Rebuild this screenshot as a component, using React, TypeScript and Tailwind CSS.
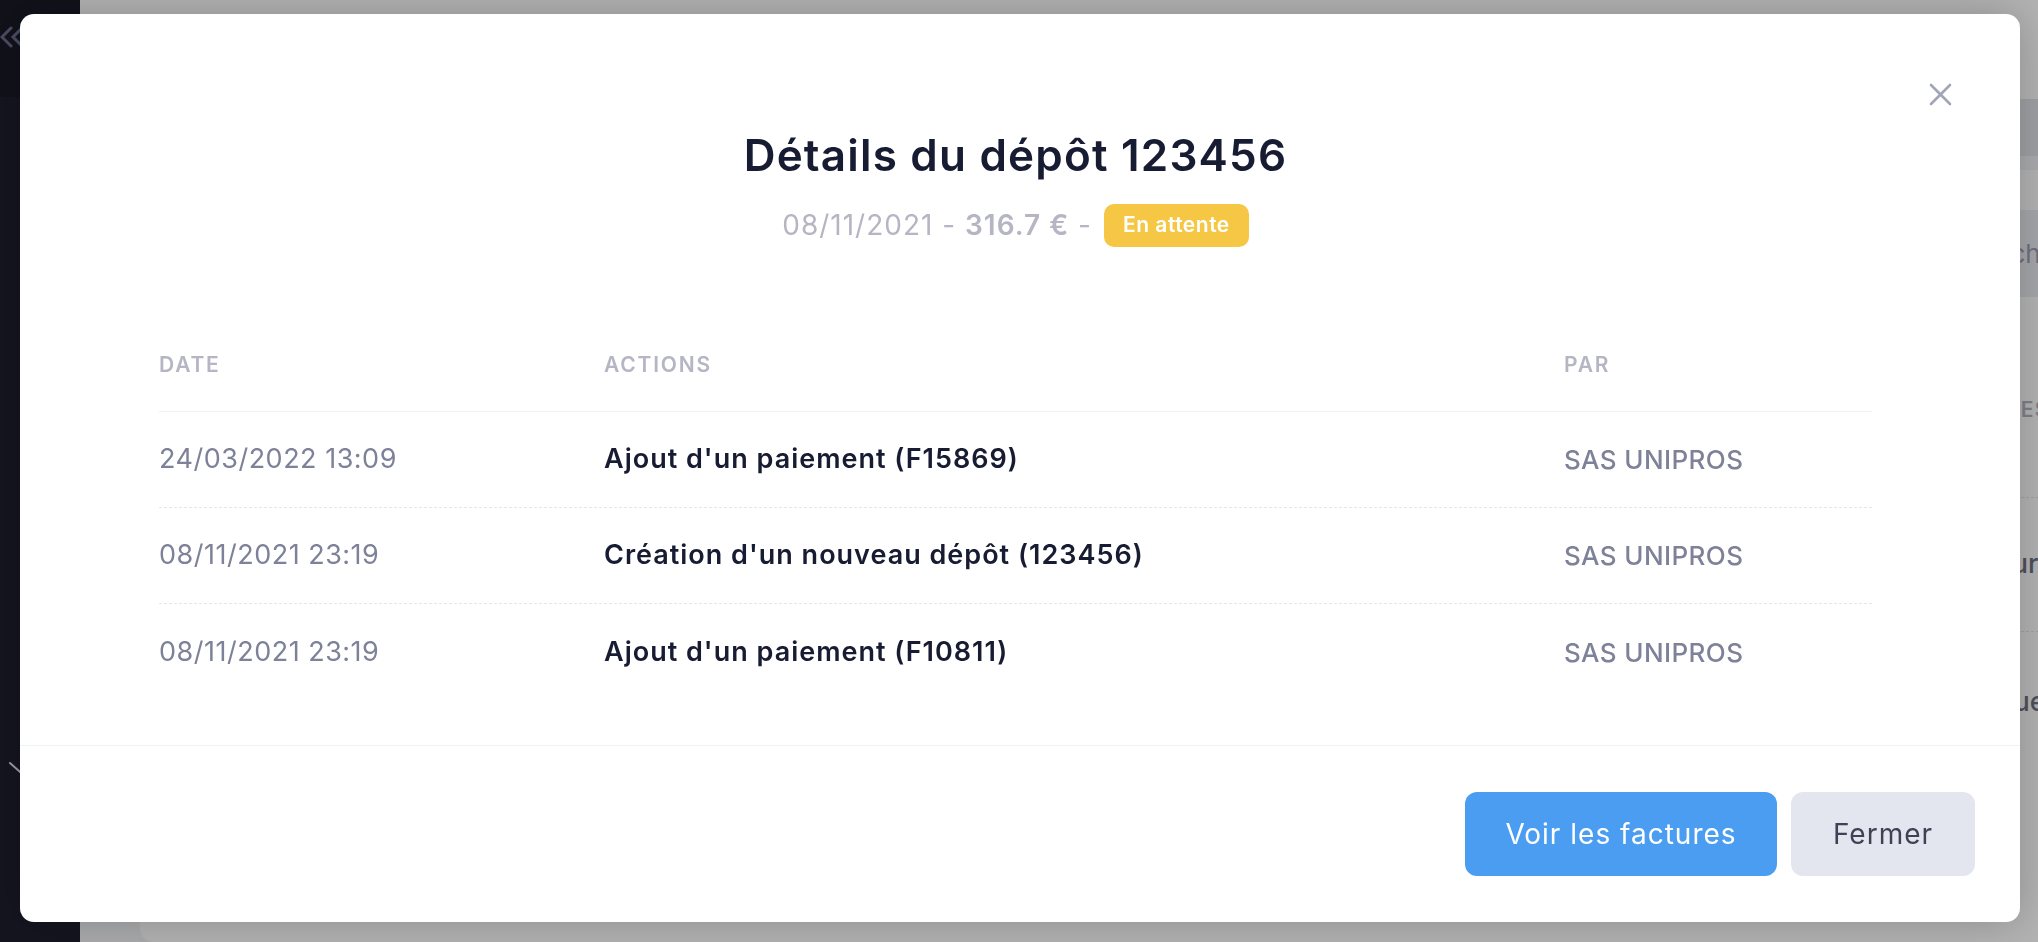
const rows = [
  { date: "24/03/2022 13:09", action: "Ajout d'un paiement (F15869)", by: "SAS UNIPROS" },
  { date: "08/11/2021 23:19", action: "Création d'un nouveau dépôt (123456)", by: "SAS UNIPROS" },
  { date: "08/11/2021 23:19", action: "Ajout d'un paiement (F10811)", by: "SAS UNIPROS" },
];

const font = { fontFamily: '"Inter", "Noto Sans", sans-serif' };

function Background() {
  return (
    <div className="flex h-[942px] w-full overflow-hidden bg-[#f3f4f7]">
      <aside className="w-[80px] shrink-0 flex flex-col bg-[#1e1e2d]">
        <div className="h-[97px] bg-[#191926] pt-[26px]">
          <svg width="28" height="22" viewBox="0 0 28 22" fill="none" stroke="#6b6b90" strokeWidth="3" strokeLinecap="round">
            <path d="M11 2 L2 11 L11 20" />
            <path d="M22 2 L13 11 L22 20" />
          </svg>
        </div>
        <div className="flex-1 pt-[664px] pl-[8px]">
          <svg width="24" height="14" viewBox="0 0 24 14" fill="none" stroke="#e2e2ea" strokeWidth="2" strokeLinecap="round">
            <path d="M2 2 L12 11 L22 2" />
          </svg>
        </div>
      </aside>

      <main className="flex-1 flex flex-col overflow-hidden">
        <header className="h-[99px] bg-white shrink-0" />
        <div className="h-[57px] bg-[#e3e5ea] shrink-0" />
        <div className="flex-1 pt-[14px] pl-[60px] mr-[-60px]">
          <div className="h-full bg-white rounded-[14px] pt-[40px]">
            <div className="flex justify-end">
              <div className="w-[128px] h-[87px] bg-[#eceef4] rounded-l-[10px] pl-[9px] flex items-center text-[26px] text-[#9ea1b2] whitespace-nowrap overflow-hidden">
                Rechercher
              </div>
            </div>
            <div className="mt-[98px] flex justify-end">
              <div className="w-[126px] overflow-hidden whitespace-nowrap">
                <div className="leading-[30px] pb-[72px] text-[21px] font-semibold tracking-[1.5px] text-[#b5b5c3] border-b border-dashed border-[#e4e6ef]">
                  ADRESSE
                </div>
                <div className="h-[134px] pl-[8px] flex items-center text-[27px] font-medium text-[#6f7283] border-b border-dashed border-[#e4e6ef]">
                  Tours
                </div>
                <div className="h-[140px] pl-[8px] flex items-center text-[27px] font-medium text-[#6f7283]">
                  Rouen
                </div>
              </div>
            </div>
          </div>
        </div>
      </main>
    </div>
  );
}

function Modal() {
  return (
    <div className="fixed inset-0 pt-[14px] pl-[20px]">
      <div className="relative w-[2000px] h-[908px] bg-white rounded-[14px] shadow-[0_0_45px_rgba(0,0,0,0.22)] flex flex-col">
        <button className="absolute top-[69px] right-[68px] w-[23px] h-[23px]">
          <svg width="23" height="23" viewBox="0 0 23 23" fill="none" stroke="#a1a5b7" strokeWidth="2.6" strokeLinecap="round">
            <path d="M2 2 L21 21" />
            <path d="M21 2 L2 21" />
          </svg>
        </button>

        <div className="flex-1 pl-[139px] pr-[148px] pt-[113px]">
          <h2 className="text-center text-[44px] leading-[56px] font-semibold tracking-[1.2px] text-[#181c32]">
            Détails du dépôt 123456
          </h2>
          <div className="mt-[20px] h-[44px] flex items-center justify-center text-[28px] tracking-[1px] text-[#b5b5c3]">
            <span>08/11/2021 -&nbsp;</span>
            <span className="font-semibold">316.7 €</span>
            <span>&nbsp;-</span>
            <span className="ml-[12px] h-[43px] px-[19px] flex items-center rounded-[10px] bg-[#f6c744] text-white text-[21px] tracking-[0.5px] font-semibold">
              En attente
            </span>
          </div>

          <div className="mt-[103px]">
            <div className="grid grid-cols-[445px_960px_1fr] leading-[30px] pb-[31px] border-b border-[#eff2f5] text-[21px] font-semibold tracking-[1.8px] text-[#b5b5c3] uppercase">
              <div>Date</div>
              <div>Actions</div>
              <div>Par</div>
            </div>
            {rows.map((row, i) => (
              <div
                key={i}
                className={`grid grid-cols-[445px_960px_1fr] h-[96px] items-center ${
                  i < rows.length - 1 ? "border-b border-dashed border-[#e4e6ef]" : ""
                }`}
              >
                <div className="text-[27px] tracking-[0.5px] text-[#7e8299]">{row.date}</div>
                <div className="text-[27px] tracking-[1px] font-semibold text-[#181c32]">{row.action}</div>
                <div className="text-[26px] tracking-[0.4px] font-medium text-[#7e8299]">{row.by}</div>
              </div>
            ))}
          </div>
        </div>

        <div className="h-[177px] border-t border-[#eff2f5] flex items-center justify-end gap-[14px] pr-[45px]">
          <button className="w-[312px] h-[84px] rounded-[12px] bg-[#4a9df0] text-white text-[28px] tracking-[1px]">
            Voir les factures
          </button>
          <button className="w-[184px] h-[84px] rounded-[12px] bg-[#e4e6ef] text-[#3f4254] text-[28px] tracking-[1px]">
            Fermer
          </button>
        </div>
      </div>
    </div>
  );
}

export default function App() {
  return (
    <div style={font} className="relative h-[942px] w-full overflow-hidden">
      <Background />
      <div className="fixed inset-0 bg-black/30" />
      <Modal />
    </div>
  );
}
